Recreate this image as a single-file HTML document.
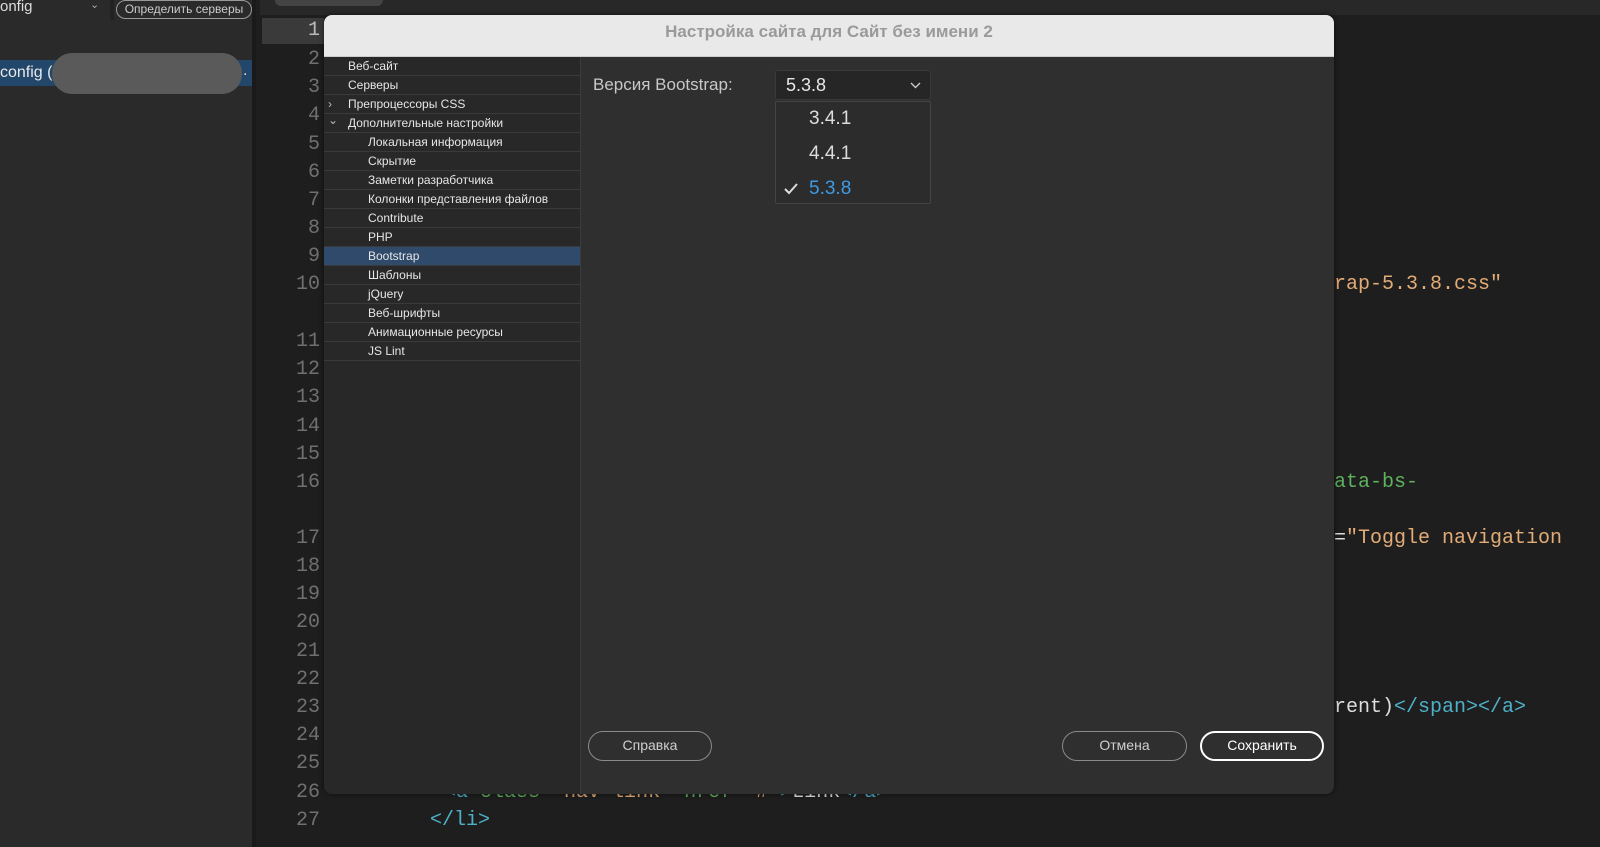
<!DOCTYPE html>
<html><head><meta charset="utf-8"><style>
*{margin:0;padding:0;box-sizing:border-box}
body{width:1600px;height:847px;overflow:hidden;background:#1e1e1e;font-family:"Liberation Sans","Noto Sans CJK SC",sans-serif;position:relative}
.abs{position:absolute}
#left{left:0;top:0;width:256px;height:847px;background:#2a2a2a;border-right:4px solid #1a1a1a}
.ln{position:absolute;left:262px;width:58px;text-align:right;font:20px "Liberation Mono",monospace;color:#707070}
.code{position:absolute;font:20px "Liberation Mono",monospace;white-space:pre}
#dlg{left:324px;top:15px;width:1010px;height:779px;background:#2f2f2f;border-radius:8px;overflow:hidden;box-shadow:0 0 6px rgba(0,0,0,.6)}
#title{height:42px;background:#e9e9e9;border-bottom:1px solid #ccc;text-align:center;line-height:34px;font-weight:bold;font-size:17px;color:#9a9a9a}
#side{position:absolute;left:0;top:42px;width:257px;height:737px;background:#282828;border-right:1px solid #3c3c3c}
.r{height:19px;border-bottom:1px solid #3a3a3a;font-size:12px;color:#e6e6e6;line-height:18px;padding-left:24px;position:relative}
.r.s{padding-left:44px}
.r.sel{background:#2f4a6a}
.btn{position:absolute;height:30px;border:1.5px solid #8a8a8a;border-radius:15px;color:#cfcfcf;font-size:14px;text-align:center;line-height:27px}
</style></head><body>
<div id="left" class="abs">
 <div class="abs" style="left:0;top:0;width:110px;height:18px;color:#ddd;font-size:15px;line-height:14px">onfig<span style="position:absolute;left:90px;top:-2px;color:#aaa;font-size:11px">&#8964;</span></div>
 <div class="abs" style="left:110px;top:0;width:4px;height:20px;background:#222"></div>
 <div class="abs" style="left:116px;top:0;width:136px;height:19px;border:1px solid #999;border-radius:10px;color:#ccc;font-size:12px;text-align:center;line-height:17px">Определить серверы</div>
 <div class="abs" style="left:0;top:60px;width:252px;height:26px;background:#23476b;color:#e8e8e8;font-size:16px;line-height:26px">config (</div>
 <div class="abs" style="left:52px;top:53px;width:190px;height:41px;background:#5a5a5a;border-radius:20px"></div>
 <div class="abs" style="left:243px;top:62px;color:#ddd;font-size:16px">.</div>
</div>
<div class="abs" style="left:260px;top:0;width:1340px;height:15px;background:#282828"></div>
<div class="abs" style="left:275px;top:0;width:108px;height:6px;background:#444;border-radius:0 0 6px 6px"></div>
<div class="abs" style="left:262px;top:18px;width:62px;height:26px;background:#3a3a3a"></div>
<div class="ln" style="top:19px;color:#bbb">1</div>
<div class="ln" style="top:48px">2</div>
<div class="ln" style="top:76px">3</div>
<div class="ln" style="top:104px">4</div>
<div class="ln" style="top:133px">5</div>
<div class="ln" style="top:161px">6</div>
<div class="ln" style="top:189px">7</div>
<div class="ln" style="top:217px">8</div>
<div class="ln" style="top:245px">9</div>
<div class="ln" style="top:273px">10</div>
<div class="ln" style="top:330px">11</div>
<div class="ln" style="top:358px">12</div>
<div class="ln" style="top:386px">13</div>
<div class="ln" style="top:415px">14</div>
<div class="ln" style="top:443px">15</div>
<div class="ln" style="top:471px">16</div>
<div class="ln" style="top:527px">17</div>
<div class="ln" style="top:555px">18</div>
<div class="ln" style="top:583px">19</div>
<div class="ln" style="top:611px">20</div>
<div class="ln" style="top:640px">21</div>
<div class="ln" style="top:668px">22</div>
<div class="ln" style="top:696px">23</div>
<div class="ln" style="top:724px">24</div>
<div class="ln" style="top:752px">25</div>
<div class="ln" style="top:781px">26</div>
<div class="ln" style="top:809px">27</div>
<div class="code" style="left:1322px;top:273px;color:#e3ab76">trap-5.3.8.css"</div>
<div class="code" style="left:1322px;top:471px;color:#5fb05f">data-bs-</div>
<div class="code" style="left:1334px;top:527px;color:#ddd">=<span style="color:#e3ab76">"Toggle navigation</span></div>
<div class="code" style="left:1322px;top:696px;color:#ddd">rrent)<span style="color:#4eb0c8">&lt;/span&gt;&lt;/a&gt;</span></div>
<div class="code" style="left:444px;top:781px;color:#4eb0c8">&lt;a <span style="color:#5fb05f">class=</span><span style="color:#e3ab76">"nav-link"</span> <span style="color:#5fb05f">href=</span><span style="color:#e3ab76">"#"</span>&gt;<span style="color:#ddd">Link</span>&lt;/a&gt;</div>
<div class="code" style="left:430px;top:809px;color:#4eb0c8">&lt;/li&gt;</div>

<div id="dlg" class="abs">
 <div id="title">Настройка сайта для Сайт без имени 2</div>
 <div id="side">
  <div class="r">Веб-сайт</div>
  <div class="r">Серверы</div>
  <div class="r"><span style="position:absolute;left:4px;color:#bbb">›</span>Препроцессоры CSS</div>
  <div class="r"><span style="position:absolute;left:4px;top:-3px;color:#bbb">⌄</span>Дополнительные настройки</div>
  <div class="r s">Локальная информация</div>
  <div class="r s">Скрытие</div>
  <div class="r s">Заметки разработчика</div>
  <div class="r s">Колонки представления файлов</div>
  <div class="r s">Contribute</div>
  <div class="r s">PHP</div>
  <div class="r s sel">Bootstrap</div>
  <div class="r s">Шаблоны</div>
  <div class="r s">jQuery</div>
  <div class="r s">Веб-шрифты</div>
  <div class="r s">Анимационные ресурсы</div>
  <div class="r s">JS Lint</div>
 </div>
 <div class="abs" style="left:269px;top:60px;color:#c8c8c8;font-size:17px">Версия Bootstrap:</div>
 <div class="abs" style="left:451px;top:55px;width:156px;height:30px;background:#262626;border:1px solid #3a3a3a;border-radius:3px;color:#e8e8e8;font-size:18px;line-height:28px;padding-left:10px">5.3.8<svg style="position:absolute;right:9px;top:11px" width="11" height="7"><path d="M1 1l4.5 4.5L10 1" stroke="#ccc" stroke-width="1.4" fill="none"/></svg></div>
 <div class="abs" style="left:451px;top:86px;width:156px;height:103px;background:#2c2c2c;border:1px solid #444;border-radius:2px;font-size:19px;color:#ddd">
  <div class="abs" style="left:33px;top:6px">3.4.1</div>
  <div class="abs" style="left:33px;top:41px">4.4.1</div>
  <div class="abs" style="left:33px;top:76px;color:#3d9ae6">5.3.8</div>
  <svg class="abs" style="left:7px;top:80px" width="16" height="14"><path d="M2 7l4 4 8-9" stroke="#ddd" stroke-width="2" fill="none"/></svg>
 </div>
 <div class="btn" style="left:264px;top:716px;width:124px">Справка</div>
 <div class="btn" style="left:738px;top:716px;width:125px">Отмена</div>
 <div class="btn" style="left:876px;top:716px;width:124px;border:2.5px solid #fff;color:#fff;line-height:25px">Сохранить</div>
</div>
</body></html>
